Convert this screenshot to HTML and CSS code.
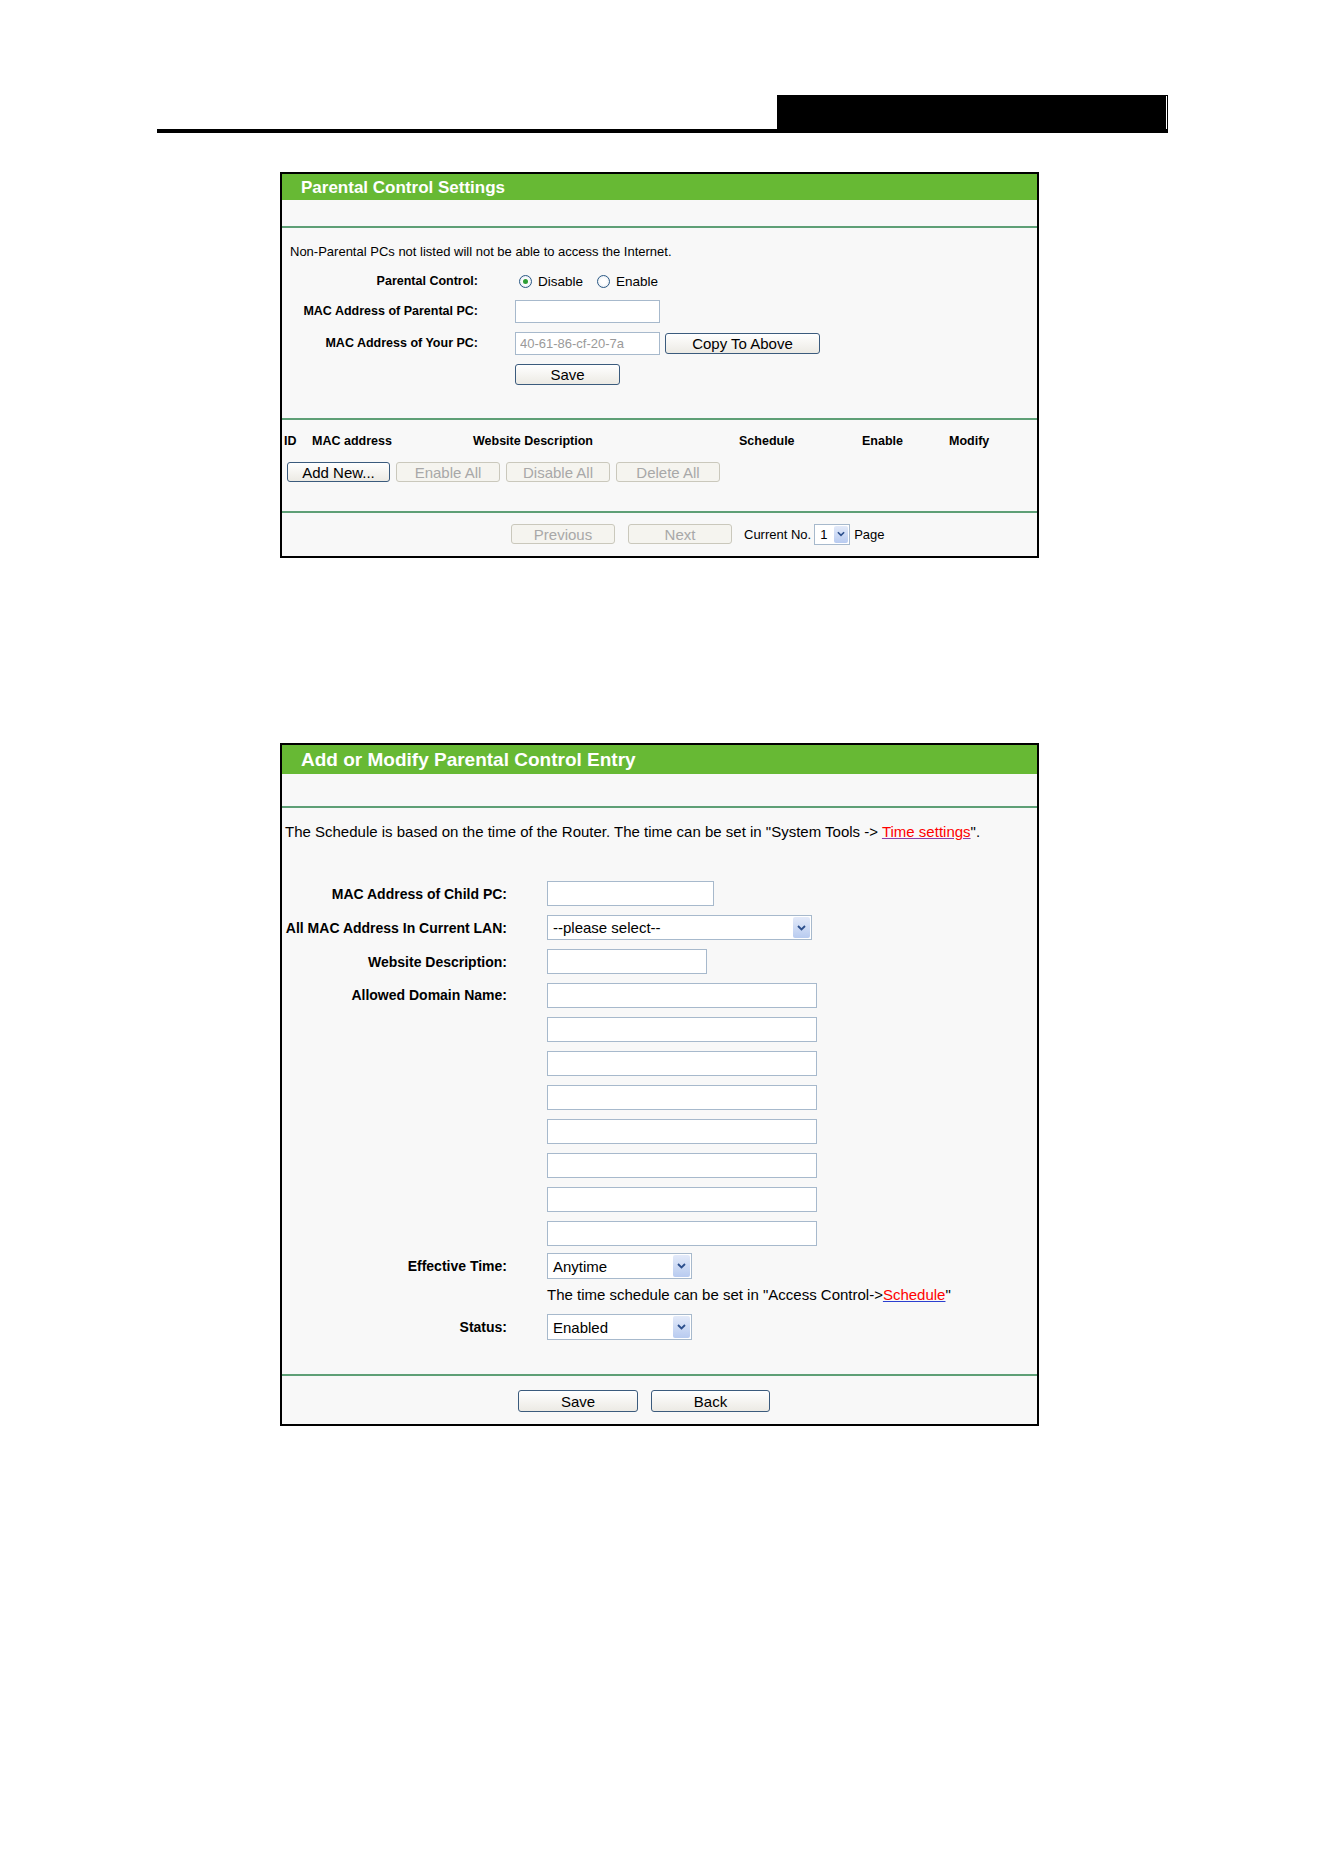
FILE: index.html
```html
<!DOCTYPE html>
<html lang="en">
<head>
    <meta charset="UTF-8">
    <meta name="viewport" content="width=device-width, initial-scale=1.0">
    <title>Parental Control</title>
    <link rel="stylesheet" href="styles.css">
</head>
<body>
<div class="page">
    <div class="doc-header">
        <div class="doc-tab"></div>
    </div>

    <!-- Parental Control Settings -->
    <div class="panel panel-settings">
        <div class="panel-title">Parental Control Settings</div>
        <div class="panel-gap"></div>
        <div class="rule"></div>

        <p class="s-note">Non-Parental PCs not listed will not be able to access the Internet.</p>

        <div class="s-row s-row-control">
            <span class="s-label">Parental Control:</span>
            <div class="s-field">
                <label class="radio radio-first"><span class="radio-dot checked"></span>Disable</label>
                <label class="radio"><span class="radio-dot"></span>Enable</label>
            </div>
        </div>
        <div class="s-row s-row-parent">
            <span class="s-label">MAC Address of Parental PC:</span>
            <div class="s-field">
                <input type="text" class="s-input">
            </div>
        </div>
        <div class="s-row s-row-yours">
            <span class="s-label">MAC Address of Your PC:</span>
            <div class="s-field">
                <input type="text" class="s-input input-muted" value="40-61-86-cf-20-7a" readonly>
                <button class="btn btn-copy">Copy To Above</button>
            </div>
        </div>
        <div class="s-row s-row-save">
            <span class="s-label"></span>
            <div class="s-field">
                <button class="btn btn-save-s">Save</button>
            </div>
        </div>

        <div class="rule rule-list"></div>

        <div class="list-head">
            <span>ID</span>
            <span>MAC address</span>
            <span>Website Description</span>
            <span>Schedule</span>
            <span>Enable</span>
            <span>Modify</span>
        </div>
        <div class="list-btns">
            <button class="btn btn-list btn-add">Add New...</button>
            <button class="btn btn-list" disabled>Enable All</button>
            <button class="btn btn-list" disabled>Disable All</button>
            <button class="btn btn-list" disabled>Delete All</button>
        </div>

        <div class="rule rule-pager"></div>

        <div class="pager">
            <button class="btn btn-list" disabled>Previous</button>
            <button class="btn btn-list btn-next" disabled>Next</button>
            <span class="pager-label">Current No.</span>
            <div class="select select-page">
                <span class="select-text">1</span>
                <span class="select-btn"><svg viewBox="0 0 9 6" width="8" height="6"><path d="M1 1l3.5 3.5L8 1" fill="none" stroke="#2c4f8c" stroke-width="1.8"/></svg></span>
            </div>
            <span class="pager-page">Page</span>
        </div>
    </div>

    <!-- Add or Modify Parental Control Entry -->
    <div class="panel panel-entry">
        <div class="panel-title panel-title-lg">Add or Modify Parental Control Entry</div>
        <div class="panel-gap panel-gap-lg"></div>
        <div class="rule"></div>

        <p class="e-note">The Schedule is based on the time of the Router. The time can be set in "System Tools -&gt; <a href="#" class="link link-time">Time settings</a>".</p>

        <div class="e-form">
            <div class="e-row">
                <span class="e-label">MAC Address of Child PC:</span>
                <div class="e-field"><input type="text" class="e-input e-input-mac"></div>
            </div>
            <div class="e-row">
                <span class="e-label">All MAC Address In Current LAN:</span>
                <div class="e-field">
                    <div class="select select-lan">
                        <span class="select-text">--please select--</span>
                        <span class="select-btn"><svg viewBox="0 0 9 6" width="9" height="6"><path d="M1 1l3.5 3.5L8 1" fill="none" stroke="#2c4f8c" stroke-width="1.8"/></svg></span>
                    </div>
                </div>
            </div>
            <div class="e-row">
                <span class="e-label">Website Description:</span>
                <div class="e-field"><input type="text" class="e-input e-input-desc"></div>
            </div>
            <div class="e-row e-row-top">
                <span class="e-label">Allowed Domain Name:</span>
                <div class="e-field domain-list">
                    <input type="text" class="e-input e-input-domain">
                    <input type="text" class="e-input e-input-domain">
                    <input type="text" class="e-input e-input-domain">
                    <input type="text" class="e-input e-input-domain">
                    <input type="text" class="e-input e-input-domain">
                    <input type="text" class="e-input e-input-domain">
                    <input type="text" class="e-input e-input-domain">
                    <input type="text" class="e-input e-input-domain">
                </div>
            </div>
            <div class="e-row e-row-time">
                <span class="e-label">Effective Time:</span>
                <div class="e-field">
                    <div class="select select-short">
                        <span class="select-text">Anytime</span>
                        <span class="select-btn"><svg viewBox="0 0 9 6" width="9" height="6"><path d="M1 1l3.5 3.5L8 1" fill="none" stroke="#2c4f8c" stroke-width="1.8"/></svg></span>
                    </div>
                </div>
            </div>
            <div class="e-row e-row-hint">
                <span class="e-label"></span>
                <div class="e-field">The time schedule can be set in "Access Control-&gt;<a href="#" class="link link-schedule">Schedule</a>"</div>
            </div>
            <div class="e-row e-row-status">
                <span class="e-label">Status:</span>
                <div class="e-field">
                    <div class="select select-short">
                        <span class="select-text">Enabled</span>
                        <span class="select-btn"><svg viewBox="0 0 9 6" width="9" height="6"><path d="M1 1l3.5 3.5L8 1" fill="none" stroke="#2c4f8c" stroke-width="1.8"/></svg></span>
                    </div>
                </div>
            </div>
        </div>

        <div class="rule rule-actions"></div>

        <div class="e-actions">
            <button class="btn btn-action">Save</button>
            <button class="btn btn-action btn-back">Back</button>
        </div>
    </div>
</div>
</body>
</html>
```

FILE: styles.css
```css
body {
    margin: 0;
    background: #fff;
    color: #000;
    font-family: "Liberation Sans", Arial, sans-serif;
}
.page {
    padding-top: 95px;
}

/* document header: black tab over a heavy rule */
.doc-header {
    margin-left: 157px;
    width: 1011px;
    border-bottom: 4px solid #000;
    display: flex;
    justify-content: flex-end;
}
.doc-tab {
    width: 391px;
    height: 34px;
    background: #000;
    display: flex;
    justify-content: flex-end;
    padding: 1px 1px 0 0;
    box-sizing: border-box;
}
.doc-tab::after {
    content: "";
    width: 1px;
    background: #fff;
}

/* panels */
.panel {
    margin-left: 280px;
    width: 759px;
    box-sizing: border-box;
    border: 2px solid #000;
    background: #f8f8f8;
}
.panel-settings {
    margin-top: 39px;
    padding-bottom: 12px;
}
.panel-entry {
    margin-top: 185px;
    padding-bottom: 12px;
}
.panel-title {
    height: 26px;
    line-height: 27px;
    padding-left: 19px;
    background: #67b934;
    color: #fff;
    font-size: 17px;
    font-weight: bold;
}
.panel-title-lg {
    height: 29px;
    line-height: 30px;
    font-size: 19px;
}
.panel-gap {
    height: 26px;
}
.panel-gap-lg {
    height: 32px;
}
.rule {
    height: 2px;
    background: #5e9f76;
}

/* settings form */
.s-note {
    margin: 16px 0 0 8px;
    font-size: 13px;
    line-height: 16px;
}
.s-row {
    display: flex;
    align-items: center;
    height: 24px;
}
.s-row-control { margin-top: 9px; }
.s-row-parent { margin-top: 6px; }
.s-row-yours { margin-top: 8px; }
.s-row-save { margin-top: 9px; height: 21px; }
.s-label {
    width: 196px;
    flex: none;
    text-align: right;
    font-size: 12.5px;
    font-weight: bold;
}
.s-field {
    margin-left: 37px;
    display: flex;
    align-items: center;
}
.radio {
    display: flex;
    align-items: center;
    font-size: 13.5px;
    margin-left: 14px;
}
.radio-first {
    margin-left: 4px;
}
.radio-dot {
    width: 13px;
    height: 13px;
    margin-right: 6px;
    box-sizing: border-box;
    border: 1px solid #2a5884;
    border-radius: 50%;
    background: radial-gradient(circle, #fff 35%, #dde4ec 100%);
    display: flex;
    align-items: center;
    justify-content: center;
}
.radio-dot.checked::after {
    content: "";
    width: 5px;
    height: 5px;
    border-radius: 50%;
    background: #2e9e35;
}

input[type="text"] {
    box-sizing: border-box;
    border: 1px solid #a7b9cc;
    background: #fff;
    font-family: inherit;
    padding: 0 4px;
    margin: 0;
    outline: none;
}
.s-input {
    width: 145px;
    height: 23px;
    font-size: 13px;
}
.input-muted {
    color: #9a9a9a;
}

/* buttons */
.btn {
    box-sizing: border-box;
    margin: 0;
    padding: 0;
    border: 1px solid #3b5b7d;
    border-radius: 3px;
    background: linear-gradient(#ffffff, #eceae4);
    color: #000;
    font-family: inherit;
    font-size: 15px;
    line-height: 1;
}
.btn:disabled {
    border-color: #cac8bc;
    background: #f5f4ef;
    color: #a8a8a8;
}
.btn-copy {
    width: 155px;
    height: 21px;
    margin-left: 5px;
}
.btn-save-s {
    width: 105px;
    height: 21px;
}

/* entry list */
.rule-list { margin-top: 33px; }
.list-head {
    margin-top: 12px;
    padding-left: 2px;
    display: grid;
    grid-template-columns: 28px 161px 266px 123px 87px 1fr;
    font-size: 12.5px;
    font-weight: bold;
    line-height: 18px;
}
.list-btns {
    margin-top: 12px;
    padding-left: 5px;
    display: flex;
    gap: 6px;
}
.btn-list {
    width: 104px;
    height: 20px;
}
.btn-add {
    width: 103px;
}
.rule-pager { margin-top: 29px; }
.pager {
    margin-top: 11px;
    padding-left: 229px;
    height: 20px;
    display: flex;
    align-items: center;
    font-size: 13px;
}
.btn-next { margin-left: 13px; }
.pager-label { margin-left: 12px; }
.pager-page { margin-left: 4px; }

/* fake select boxes */
.select {
    display: flex;
    box-sizing: border-box;
    padding: 1px;
    border: 1px solid #a7b9cc;
    background: #fff;
}
.select-text {
    flex: 1;
    display: flex;
    align-items: center;
    padding-left: 4px;
}
.select-btn {
    width: 17px;
    display: flex;
    align-items: center;
    justify-content: center;
    border-radius: 2px;
    background: linear-gradient(#e3eaf9, #b8cbf0);
}
.select-page {
    width: 36px;
    height: 21px;
    margin-left: 3px;
    font-size: 13px;
}
.select-page .select-btn {
    width: 14px;
}
.select-lan {
    width: 265px;
    height: 25px;
    font-size: 15px;
}
.select-short {
    width: 145px;
    height: 26px;
    font-size: 15px;
}

/* entry form */
.e-note {
    margin: 15px 0 0 3px;
    font-size: 15px;
    line-height: 18px;
}
.link {
    color: #f00;
    text-decoration: underline;
}
.link-time { text-decoration-color: #8a3fa8; }
.link-schedule { text-decoration-color: #2b3fd0; }
.e-form {
    margin-top: 40px;
}
.e-row {
    display: flex;
    align-items: center;
    margin-top: 9px;
}
.e-row:first-child { margin-top: 0; }
.e-row-top { align-items: flex-start; }
.e-row-top .e-label { line-height: 25px; }
.e-row-time { margin-top: 7px; }
.e-row-hint {
    margin-top: 7px;
    font-size: 15px;
    line-height: 18px;
}
.e-row-status { margin-top: 10px; }
.e-label {
    width: 225px;
    flex: none;
    text-align: right;
    font-size: 14px;
    font-weight: bold;
}
.e-field {
    margin-left: 40px;
}
.domain-list {
    display: flex;
    flex-direction: column;
    gap: 9px;
}
.e-input {
    height: 25px;
    font-size: 15px;
}
.e-input-mac { width: 167px; }
.e-input-desc { width: 160px; }
.e-input-domain { width: 270px; }

.rule-actions { margin-top: 34px; }
.e-actions {
    margin-top: 14px;
    padding-left: 236px;
    display: flex;
}
.btn-action {
    width: 120px;
    height: 22px;
}
.btn-back {
    width: 119px;
    margin-left: 13px;
}
```
